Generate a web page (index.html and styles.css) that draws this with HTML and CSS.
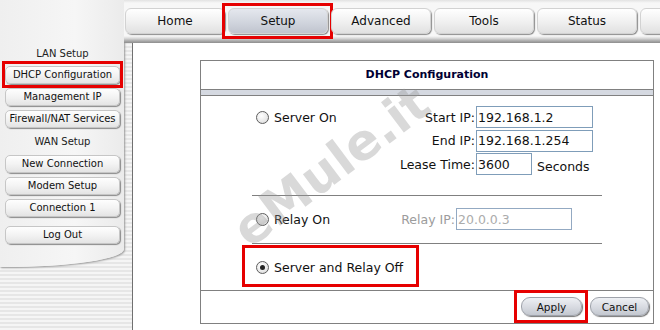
FILE: index.html
```html
<!DOCTYPE html>
<html lang="en">

<head>
  <meta charset="UTF-8">
  <title>DHCP Configuration</title>
  <link rel="stylesheet" href="styles.css">
</head>

<body>
  <div class="page">
    <div class="side">
      <div class="side-title">LAN Setup</div>
      <a href="#" class="side-btn marked">DHCP Configuration</a>
      <a href="#" class="side-btn">Management IP</a>
      <a href="#" class="side-btn">Firewall/NAT Services</a>
      <div class="side-title wan">WAN Setup</div>
      <a href="#" class="side-btn">New Connection</a>
      <a href="#" class="side-btn">Modem Setup</a>
      <a href="#" class="side-btn">Connection 1</a>
      <a href="#" class="side-btn logout">Log Out</a>
    </div>

    <div class="main">
      <div class="tabs">
        <a href="#" class="tab">Home</a>
        <a href="#" class="tab active">Setup</a>
        <a href="#" class="tab">Advanced</a>
        <a href="#" class="tab">Tools</a>
        <a href="#" class="tab">Status</a>
        <a href="#" class="tab"></a>
      </div>

      <div class="content">
        <form class="panel">
          <div class="panel-head">DHCP Configuration</div>
          <div class="panel-band"></div>

          <div class="panel-body">
            <div class="opt opt-server">
              <label class="radio-cell"><input type="radio" name="mode"> Server On</label>
              <div class="fields">
                <label for="startIp">Start IP:</label>
                <input type="text" id="startIp" class="ip" value="192.168.1.2">
                <label for="endIp">End IP:</label>
                <input type="text" id="endIp" class="ip" value="192.168.1.254">
                <label for="lease">Lease Time:</label>
                <span class="lease-cell">
                  <input type="text" id="lease" class="lease" value="3600">
                  <span class="unit">Seconds</span>
                </span>
              </div>
            </div>

            <div class="opt opt-relay">
              <label class="radio-cell"><input type="radio" name="mode"> Relay On</label>
              <div class="fields relay-fields">
                <label for="relayIp" class="off">Relay IP:</label>
                <input type="text" id="relayIp" class="ip relay" value="20.0.0.3" disabled>
              </div>
            </div>

            <div class="opt opt-off">
              <label class="radio-cell marked-opt"><input type="radio" name="mode" checked> Server and Relay Off</label>
            </div>
          </div>

          <div class="panel-foot">
            <button type="submit" class="btn apply">Apply</button>
            <button type="button" class="btn cancel">Cancel</button>
          </div>
        </form>
      </div>
    </div>

    <div class="watermark">eMule.it</div>
  </div>
</body>

</html>
```

FILE: styles.css
```css
* {
  box-sizing: border-box;
}

body {
  margin: 0;
  font-family: "DejaVu Sans", Verdana, sans-serif;
  color: #111111;
  background-color: #ffffff;
}

.page {
  position: relative;
  display: flex;
  width: 660px;
  height: 330px;
  overflow: hidden;
  background: repeating-linear-gradient(to bottom, #f5f5f5 0, #f5f5f5 2px, #e6e6e6 2px, #e6e6e6 4px);
}

/* red highlight boxes drawn over the screenshot */
.marked::after,
.tab.active::after,
.marked-opt::after,
.btn.apply::after {
  content: "";
  position: absolute;
  border: 3px solid #e60000;
  pointer-events: none;
}

/* left menu */
.side {
  flex: none;
  display: flex;
  flex-direction: column;
  width: 124px;
  height: 267px;
  padding: 47px 4px 0 5px;
  background: linear-gradient(to right, #efefef, #f6f6f6 60%, #ebebeb);
  border-radius: 0 0 120px 0 / 0 0 18px 0;
  box-shadow: 1px 1px 2px #9a9a9a;
}

.side-title {
  font-size: 10px;
  line-height: 14px;
  text-align: center;
  color: #222222;
  margin-bottom: 5px;
}

.side-title.wan {
  margin-top: 3px;
  margin-bottom: 6px;
}

.side-btn {
  position: relative;
  display: block;
  height: 18px;
  margin-bottom: 4px;
  font-size: 10px;
  line-height: 16px;
  text-align: center;
  color: #111111;
  text-decoration: none;
  border: 1px solid #c6c6c6;
  border-radius: 5px;
  background: linear-gradient(#fefefe, #f3f3f3 50%, #e4e4e4);
  box-shadow: 1px 1px 1px #8a8a8a;
}

.side-btn.logout {
  margin-top: 5px;
}

.side-btn.marked::after {
  top: -6px;
  left: -4px;
  right: -4px;
  bottom: -5px;
}

/* top tabs */
.main {
  flex: 1;
  display: flex;
  flex-direction: column;
}

.tabs {
  flex: none;
  display: flex;
  gap: 3px;
  height: 43px;
  padding: 8px 0 0 1px;
  background: linear-gradient(to bottom, #e2e2e2 0, #f7f7f7 3px, #f7f7f7 36px, #dedede 38px, #a9a9a9 41px, #8e8e8e 43px);
}

.tab {
  position: relative;
  flex: none;
  width: 100px;
  height: 26px;
  font-size: 12px;
  line-height: 25px;
  text-align: center;
  color: #111111;
  text-decoration: none;
  border: 1px solid #d2d2d2;
  border-radius: 6px;
  background: linear-gradient(#ffffff, #f1f1f1 50%, #e1e1e1);
  box-shadow: 1px 1px 1px #8c8c8c;
}

.tab.active {
  background: linear-gradient(#e5e8ee, #cfd3dc 60%, #c0c4ce);
}

.tab.active::after {
  top: -6px;
  left: -7px;
  right: -6px;
  bottom: -6px;
}

/* content */
.content {
  flex: 1;
  margin-left: 8px;
  padding: 17px 0 0 67px;
  border-left: 1px solid #707070;
  background-color: #ffffff;
}

.panel {
  display: flex;
  flex-direction: column;
  width: 454px;
  height: 264px;
  margin: 0;
  border: 1px solid #808080;
}

.panel-head {
  height: 28px;
  font-size: 11px;
  font-weight: bold;
  line-height: 28px;
  text-align: center;
  color: #000033;
}

.panel-band {
  height: 7px;
  border-top: 1px solid #808080;
  border-bottom: 1px solid #808080;
  background-color: #d5d9e1;
}

.panel-body {
  flex: 1;
  padding-left: 51px;
}

.opt {
  display: flex;
  width: 350px;
  border-bottom: 1px solid #808080;
}

.opt-server {
  padding: 10px 0 20px;
}

.opt-relay {
  padding: 12px 0 13px;
}

.opt-off {
  height: 46px;
  align-items: center;
  border-bottom: none;
}

.radio-cell {
  position: relative;
  flex: none;
  display: flex;
  align-items: center;
  width: 143px;
  height: 22px;
  padding-left: 4px;
  font-size: 12.5px;
  white-space: nowrap;
}

.radio-cell input {
  appearance: none;
  position: relative;
  flex: none;
  width: 13px;
  height: 13px;
  margin: 0 5px 0 0;
  border: 1px solid #5e5e5e;
  border-radius: 50%;
  background: radial-gradient(circle at 40% 35%, #ffffff, #e6e6e6 65%, #c4c4c4);
}

.radio-cell input:checked::after {
  content: "";
  position: absolute;
  top: 3px;
  left: 3px;
  width: 5px;
  height: 5px;
  border-radius: 50%;
  background-color: #222222;
}

.marked-opt {
  width: auto;
  height: 16px;
  margin-left: 2px;
  padding: 0 2px;
}

.marked-opt::after {
  top: -14px;
  left: -12px;
  right: -14px;
  bottom: -12px;
}

.fields {
  flex: none;
  display: grid;
  grid-template-columns: 81px auto;
  align-items: center;
  row-gap: 1.5px;
  font-size: 12.5px;
}

.fields label {
  text-align: right;
  padding-right: 1px;
  white-space: nowrap;
}

.relay-fields {
  grid-template-columns: 61px auto;
}

.fields label.off {
  color: #9c9c9c;
}

.fields input {
  height: 22px;
  margin: 0;
  padding: 0 1px;
  font-family: "DejaVu Sans", Verdana, sans-serif;
  font-size: 12.5px;
  color: #111111;
  border: 1px solid #7f9db9;
  background-color: #ffffff;
}

.fields .ip {
  width: 117px;
}

.lease-cell {
  display: flex;
  align-items: center;
  white-space: nowrap;
}

.fields .lease {
  width: 56px;
}

.fields .relay {
  width: 116px;
  color: #acacac;
  border-color: #93a9c2;
}

.unit {
  margin-left: 5px;
  padding-top: 4px;
}

.panel-foot {
  display: flex;
  justify-content: flex-end;
  align-items: flex-start;
  gap: 8px;
  height: 33px;
  padding: 6px 4px 0 0;
  border-top: 1px solid #808080;
}

.btn {
  position: relative;
  width: 61px;
  height: 19px;
  padding: 0;
  font-family: "DejaVu Sans", Verdana, sans-serif;
  font-size: 10.5px;
  color: #111111;
  border: 1px solid #9ea2aa;
  border-radius: 9px;
  background: linear-gradient(#eef0f4, #d5d8df 60%, #c3c7cf);
  box-shadow: 1px 1px 1px #777777;
}

.btn.cancel {
  width: 59px;
}

.btn.apply::after {
  top: -8px;
  left: -8px;
  right: -7px;
  bottom: -8px;
}

.watermark {
  position: absolute;
  left: 216px;
  top: 141px;
  font-size: 50px;
  font-weight: bold;
  line-height: 50px;
  white-space: nowrap;
  color: rgba(150, 150, 150, 0.36);
  transform: rotate(-37deg);
  pointer-events: none;
}
```
